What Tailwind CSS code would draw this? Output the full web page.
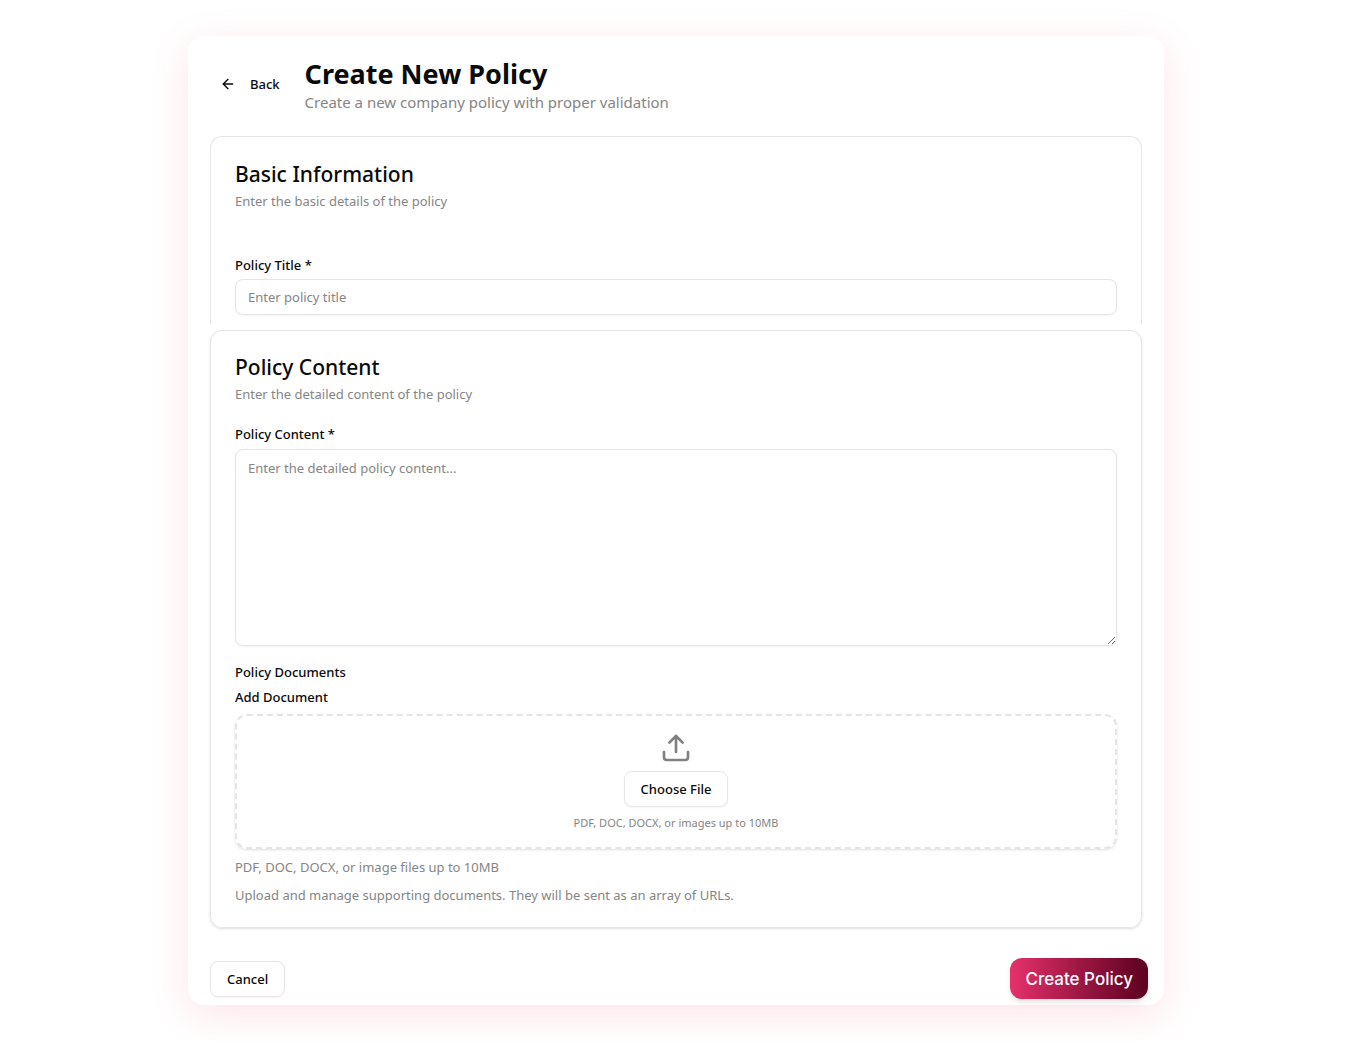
<!DOCTYPE html>
<html lang="en">
<head>
    <meta charset="UTF-8">
    <meta name="viewport" content="width=device-width, initial-scale=1.0">
    <title>Create New Policy</title>
    <script src="https://cdn.jsdelivr.net/npm/@tailwindcss/browser@4"></script>
</head>
<body class="bg-white font-['Noto_Sans',sans-serif] text-[13px] leading-5 text-neutral-950">

<main class="max-w-[976px] mx-auto my-9 px-[22px] pt-5 pb-1.5 rounded-2xl bg-white shadow-[0_10px_40px_rgba(244,63,94,0.14)]">
    <header class="flex items-center gap-[25px] pl-3 mb-6">
        <button type="button" class="flex items-center gap-3.5 font-medium">
            <svg class="size-4 -ml-0.5" viewBox="0 0 24 24" fill="none" stroke="currentColor" stroke-width="2" stroke-linecap="round" stroke-linejoin="round"><path d="m12 19-7-7 7-7"/><path d="M19 12H5"/></svg>
            Back
        </button>
        <div>
            <h1 class="text-[27px] leading-9 font-bold">Create New Policy</h1>
            <p class="text-[15px] text-[#858585]">Create a new company policy with proper validation</p>
        </div>
    </header>

    <form>
        <section class="border border-b-0 border-neutral-200 rounded-t-xl px-6 pt-[23px] pb-[9px] mb-1.5">
            <h2 class="text-[21px] leading-7 font-medium">Basic Information</h2>
            <p class="text-[#858585] mt-[3px] mb-11">Enter the basic details of the policy</p>
            <label for="title" class="block font-medium mb-1">Policy Title *</label>
            <input id="title" type="text" placeholder="Enter policy title" class="block w-full h-9 px-3 border border-neutral-200 rounded-lg shadow-xs placeholder:text-[#858585]">
        </section>

        <section class="border border-neutral-200 rounded-xl px-6 pt-[22px] pb-[22px] shadow-sm">
            <h2 class="text-[21px] leading-7 font-medium">Policy Content</h2>
            <p class="text-[#858585] mt-[3px] mb-5">Enter the detailed content of the policy</p>
            <label for="content" class="block font-medium mb-[5px]">Policy Content *</label>
            <textarea id="content" placeholder="Enter the detailed policy content..." class="block w-full h-[197px] px-3 py-2 border border-neutral-200 rounded-lg shadow-xs placeholder:text-[#858585] resize-y"></textarea>

            <h3 class="font-medium mt-4 mb-[5px]">Policy Documents</h3>
            <label for="file" class="block font-medium mb-[7px]">Add Document</label>
            <div class="flex flex-col items-center border-2 border-dashed border-neutral-200 rounded-xl pt-4 pb-3.5 shadow-sm">
                <svg class="size-8 mb-[7px] text-[#808080]" viewBox="0 0 24 24" fill="none" stroke="currentColor" stroke-width="2" stroke-linecap="round" stroke-linejoin="round"><path d="M12 3v12"/><path d="m17 8-5-5-5 5"/><path d="M21 15v4a2 2 0 0 1-2 2H5a2 2 0 0 1-2-2v-4"/></svg>
                <input id="file" type="file" class="hidden">
                <button type="button" class="h-9 px-4 border border-neutral-200 rounded-lg shadow-xs font-medium">Choose File</button>
                <p class="text-[11px] text-[#858585] mt-1.5">PDF, DOC, DOCX, or images up to 10MB</p>
            </div>
            <p class="text-[#858585] mt-2">PDF, DOC, DOCX, or image files up to 10MB</p>
            <p class="text-[#858585] mt-2">Upload and manage supporting documents. They will be sent as an array of URLs.</p>
        </section>

        <div class="flex items-center justify-between mt-[30px] -mr-1.5">
            <button type="button" class="h-9 px-4 border border-neutral-200 rounded-lg shadow-xs font-medium">Cancel</button>
            <button type="submit" class="h-[41px] px-[15px] rounded-xl bg-linear-to-r from-[#e6306c] to-[#5c0220] text-white font-['Inter',sans-serif] text-[17px] font-medium shadow-md">Create Policy</button>
        </div>
    </form>
</main>

<script>
    // the visible button opens the hidden file picker
    document.querySelector('#file + button').addEventListener('click', () => {
        document.getElementById('file').click();
    });
</script>
</body>
</html>
